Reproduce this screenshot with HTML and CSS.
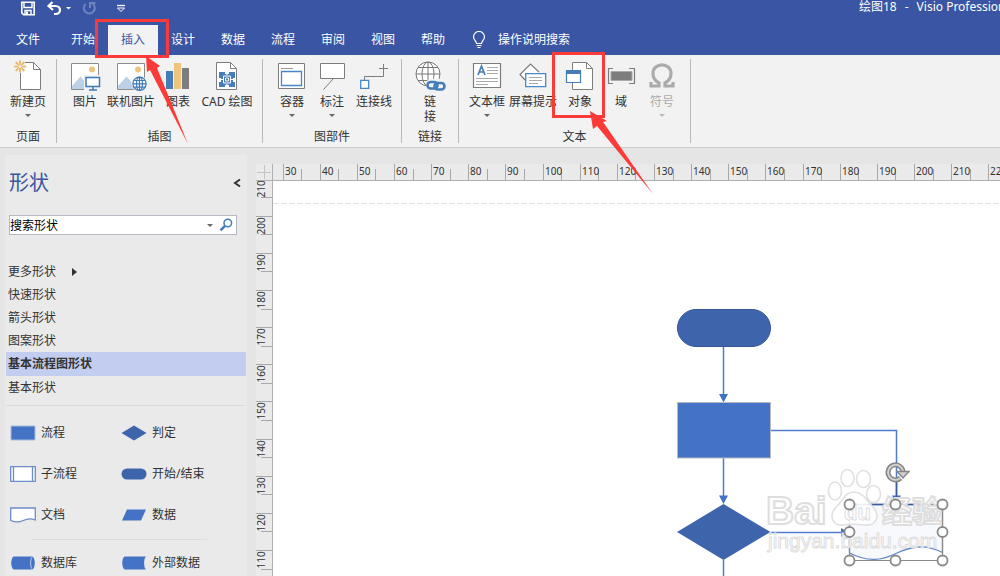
FILE: index.html
```html
<!DOCTYPE html>
<html lang="zh-CN">
<head>
<meta charset="utf-8">
<title>绘图18 - Visio Professional</title>
<link rel="stylesheet" href="styles.css">
</head>
<body>
<div class="app">
  <header class="header">
    <div class="titlebar">
      <div class="quick">
        <button class="qbtn" aria-label="保存"><svg width="16" height="16" viewBox="0 0 16 16"><path d="M1.800 2.300h12.400v12.400H3.600L1.800 13z" fill="none" stroke="#fff" stroke-width="1.600"/><path d="M4 2.500v5h8v-5M5 14.500v-4h6v4" fill="none" stroke="#fff" stroke-width="1.400"/><path d="M6 11.500h2v3H6z" fill="#fff"/></svg></button>
        <button class="qbtn" aria-label="撤消"><svg width="26" height="16" viewBox="0 0 26 16"><path d="M6.500 2L2.500 6l4.500 4M3 6h6.500c6 0 6 8 0 8H8" fill="none" stroke="#fff" stroke-width="2.200"/><path d="M20 7h5l-2.500 2.500z" fill="#fff"/></svg></button>
        <button class="qbtn" aria-label="恢复" disabled><svg width="16" height="16" viewBox="0 0 16 16"><path d="M3.500 4a5.500 5.500 0 1 0 7-.5M8 8V3h5.500" fill="none" stroke="#6f84c0" stroke-width="2"/></svg></button>
        <button class="qbtn qmore" aria-label="自定义快速访问工具栏"><svg width="10" height="10" viewBox="0 0 10 10"><path d="M1 2.500h8" stroke="#fff" stroke-width="1.300"/><path d="M1.500 5h7L5 8.500z" fill="none" stroke="#fff"/></svg></button>
      </div>
      <div class="doc-title"><span>绘图18</span><span>-</span><span>Visio Professional</span></div>
    </div>
    <nav class="tabs">
      <button class="tab file">文件</button>
      <button class="tab">开始</button>
      <button class="tab active">插入</button>
      <button class="tab">设计</button>
      <button class="tab">数据</button>
      <button class="tab">流程</button>
      <button class="tab">审阅</button>
      <button class="tab">视图</button>
      <button class="tab">帮助</button>
      <button class="tell"><svg width="14" height="18" viewBox="0 0 14 18"><path d="M4.500 12.500c0-2.500-3-3.500-3-6.500a5.500 5.500 0 0 1 11 0c0 3-3 4-3 6.500zM4.500 14.500h5M5.500 16.500h3" fill="none" stroke="#fff" stroke-width="1.200"/></svg><span>操作说明搜索</span></button>
    </nav>
  </header>

  <section class="ribbon">
    <div class="group g-page">
      <div class="tools">
        <button class="tool w56"><svg width="32" height="32" viewBox="0 0 32 32"><path d="M8.500 4v26.500h20V10.500l-7-7H13" fill="#fff" stroke="#7d7d7d"/><path d="M21.500 3.500v7h7" fill="none" stroke="#7d7d7d"/><circle cx="8" cy="7.500" r="6.500" fill="#f2f2f2"/><g stroke="#e8b35a" stroke-width="1.700"><path d="M8 1.500V5M8 10v3.500M2 7.500h3.500M10.500 7.500H14M3.700 3.200l2.500 2.500M9.800 9.300l2.500 2.500M12.300 3.200L9.800 5.700M6.200 9.300l-2.500 2.500"/></g><circle cx="8" cy="7.500" r="2" fill="none" stroke="#e8b35a"/></svg><span>新建页</span><i class="caret"></i></button>
      </div>
      <div class="gname">页面</div>
    </div>
    <div class="group g-illus">
      <div class="tools">
        <button class="tool w36"><svg width="32" height="32" viewBox="0 0 32 32"><path d="M2.500 4.500h27v26h-27z" fill="#fff" stroke="#8c8c8c"/><path d="M3 27l8.500-9.500 7 8V30H3z" fill="#bcd0e6"/><circle cx="23" cy="10.500" r="3" fill="#edc57c"/><path d="M15 16h17v16H15z" fill="#f2f2f2"/><path d="M17 18.500h13.500v9H17z" fill="#fff" stroke="#3f7ab8" stroke-width="1.500"/><path d="M24 28v3M20 31h8" stroke="#3f7ab8" stroke-width="1.500"/></svg><span>图片</span></button>
        <button class="tool w56"><svg width="32" height="32" viewBox="0 0 32 32"><path d="M2.500 4.500h27v26h-27z" fill="#fff" stroke="#8c8c8c"/><path d="M3 27l8.500-9.500 7 8V30H3z" fill="#bcd0e6"/><circle cx="23" cy="10.500" r="3" fill="#edc57c"/><circle cx="24.500" cy="24.800" r="8" fill="#f2f2f2"/><g fill="#fff" stroke="#3f7ab8" stroke-width="1.200"><circle cx="24.500" cy="24.800" r="6.600"/><ellipse cx="24.500" cy="24.800" rx="3" ry="6.600"/><path d="M18 24.800h13M19 21.500h11M19 28.200h11M24.500 18v13"/></g></svg><span>联机图片</span></button>
        <button class="tool w38"><svg width="32" height="32" viewBox="0 0 32 32"><path d="M4 12h7v18H4z" fill="#457db8"/><path d="M12 4h7v26h-7z" fill="#edc57c"/><path d="M20 9h7v21h-7z" fill="#7d7d7d"/></svg><span>图表</span></button>
        <button class="tool w60"><svg width="32" height="32" viewBox="0 0 32 32"><path d="M5.500 3.500h14l6 6v21h-20z" fill="#fff" stroke="#7d7d7d"/><path d="M19.500 3.500v6h6" fill="none" stroke="#7d7d7d"/><path d="M8 13h6v2h4v-2h6v6h-2v4h2v5h-6v-2h-4v2H8v-5h2v-4H8z" fill="#457db8"/><path d="M12.500 17h7v7h-7z" fill="#457db8" stroke="#fff"/><path d="M14.500 19h3v3h-3z" fill="none" stroke="#fff"/><path d="M16 13v3M16 25v3M8 20.500h4M20 20.500h4" stroke="#fff"/></svg><span>CAD 绘图</span></button>
      </div>
      <div class="gname">插图</div>
    </div>
    <div class="group g-parts">
      <div class="tools">
        <button class="tool w40"><svg width="32" height="32" viewBox="0 0 32 32"><path d="M2.500 4.500h26v25h-26z" fill="#fff" stroke="#7d7d7d"/><path d="M5 9.500h12" stroke="#999"/><path d="M5.500 12.500h20v14h-20z" fill="#fff" stroke="#4a86c5" stroke-width="1.300"/></svg><span>容器</span><i class="caret"></i></button>
        <button class="tool w40"><svg width="32" height="32" viewBox="0 0 32 32"><path d="M4.500 4.500h24v15h-24zM17 20L7.500 30.500" fill="#fff" stroke="#7d7d7d"/></svg><span>标注</span><i class="caret"></i></button>
        <button class="tool w44"><svg width="32" height="32" viewBox="0 0 32 32"><path d="M6.500 21v-3.500h19V5M21 9.500h9" fill="none" stroke="#7d7d7d"/><path d="M2.700 21.300h8v8h-8z" fill="#fff" stroke="#4a86c5" stroke-width="1.300"/></svg><span>连接线</span></button>
      </div>
      <div class="gname">图部件</div>
    </div>
    <div class="group g-link">
      <div class="tools">
        <button class="tool w56"><svg width="32" height="32" viewBox="0 0 32 32"><g fill="none" stroke="#777"><circle cx="14" cy="15" r="12" fill="#fff"/><ellipse cx="14" cy="15" rx="6" ry="12"/><path d="M2 15h24M4 8.500h20M4 21.500h20M14 3v24"/></g><rect x="12" y="20" width="20" height="12" rx="5" fill="#f2f2f2"/><g fill="none" stroke="#457db8" stroke-width="2.600"><rect x="13.500" y="23" width="10" height="6.500" rx="3.200"/><rect x="20.500" y="24" width="10" height="6.500" rx="3.200"/></g></svg><span>链<br>接</span></button>
      </div>
      <div class="gname">链接</div>
    </div>
    <div class="group g-text">
      <div class="tools">
        <button class="tool w40"><svg width="32" height="32" viewBox="0 0 32 32"><path d="M2.500 4.500h27v24h-27z" fill="#fff" stroke="#7d7d7d" stroke-width="1.200"/><path d="M7 16l3.500-9 3.500 9M8.200 13h4.600" fill="none" stroke="#457db8" stroke-width="1.700"/><path d="M16 8.500h11M16 11.500h11M16 14.500h11M5 19.500h22M5 22.500h22M5 25.500h12" stroke="#aaa"/></svg><span>文本框</span><i class="caret"></i></button>
        <button class="tool w52"><svg width="32" height="32" viewBox="0 0 32 32"><path d="M8 21l-5-5.500L13.500 5 22 13" fill="#fff" stroke="#7d7d7d" stroke-width="1.200"/><path d="M8.700 14.700h20v13h-20z" fill="#fff" stroke="#4a86c5" stroke-width="1.300"/><path d="M12 18.500h13M12 21.500h13M12 24.500h9" stroke="#aaa"/></svg><span>屏幕提示</span></button>
        <button class="tool w42"><svg width="32" height="32" viewBox="0 0 32 32"><path d="M8.500 3.500h14l6 6v21h-20z" fill="#fff" stroke="#7d7d7d"/><path d="M22.500 3.500v6h6" fill="none" stroke="#7d7d7d"/><path d="M2.500 11.500h14v12h-14z" fill="#fff" stroke="#457db8" stroke-width="1.200"/><path d="M2 11h15v4H2z" fill="#457db8"/></svg><span>对象</span></button>
        <button class="tool w40"><svg width="32" height="32" viewBox="0 0 32 32"><path d="M8 9.500H3.500v15H8M24 9.500h5.500v15H24" fill="none" stroke="#7d7d7d" stroke-width="1.200"/><path d="M6 12.500h21v9H6z" fill="#7d7d7d" stroke="#aaa"/></svg><span>域</span></button>
        <button class="tool w42" disabled><svg width="32" height="32" viewBox="0 0 32 32"><path d="M5 28.500V23M27 28.500V23M4.500 27H13v-3c-4-2-6-5-6-9.500 0-11.500 18-11.500 18 0 0 4.500-2 7.500-6 9.500v3h8.500" fill="none" stroke="#ababab" stroke-width="3.200"/></svg><span>符号</span><i class="caret"></i></button>
      </div>
      <div class="gname">文本</div>
    </div>
  </section>

  <main class="work">
    <aside class="panel">
      <div class="panel-head">
        <h1>形状</h1>
        <button class="collapse" aria-label="折叠"><svg width="8" height="10" viewBox="0 0 8 10"><path d="M7 1.500L2 5l5 3.500" fill="none" stroke="#333" stroke-width="2"/></svg></button>
      </div>
      <div class="search">
        <input type="text" aria-label="搜索形状" value="搜索形状">
        <i class="caret"></i>
        <button class="go" aria-label="搜索"><svg width="14" height="14" viewBox="0 0 14 14"><circle cx="8.800" cy="5" r="3.800" fill="#fff" stroke="#457db8" stroke-width="1.500"/><path d="M6 7.800L1.500 12.300" stroke="#457db8" stroke-width="2.400"/></svg></button>
      </div>
      <div class="sets">
        <button class="set">更多形状<i class="right"></i></button>
        <button class="set">快速形状</button>
        <button class="set">箭头形状</button>
        <button class="set">图案形状</button>
        <button class="set selected">基本流程图形状</button>
        <button class="set">基本形状</button>
      </div>
      <div class="stencil">
        <button class="shape"><svg width="26" height="16" viewBox="0 0 26 16"><path d="M1 1h24v14H1z" fill="#4472c4" stroke="#a9bbdf"/></svg>流程</button>
        <button class="shape"><svg width="26" height="16" viewBox="0 0 26 16"><path d="M.500 8L13 .500 25.500 8 13 15.500z" fill="#3e64ac"/></svg>判定</button>
        <button class="shape"><svg width="26" height="16" viewBox="0 0 26 16"><path d="M.700 .700h24.600v14.600H.700zM3.500 1v14M22.500 1v14" fill="#fff" stroke="#6d8cca" stroke-width="1.300"/></svg>子流程</button>
        <button class="shape"><svg width="26" height="16" viewBox="0 0 26 16"><rect x=".500" y="2.500" width="25" height="11" rx="5.500" fill="#3e64ac"/></svg>开始/结束</button>
        <button class="shape"><svg width="26" height="16" viewBox="0 0 26 16"><path d="M.700 1h24.600v12c-5-2-8-1.500-12 .5s-8 2-12.600 0z" fill="#fff" stroke="#6d8cca" stroke-width="1.300"/></svg>文档</button>
        <button class="shape"><svg width="26" height="16" viewBox="0 0 26 16"><path d="M6 2.500h19L20 13.500H1z" fill="#4472c4"/></svg>数据</button>
      </div>
      <hr class="rule">
      <div class="stencil last">
        <button class="shape"><svg width="26" height="16" viewBox="0 0 26 16"><path d="M3.500 1.500h19c3 2 3 11 0 13h-19c-3-2-3-11 0-13z" fill="#4472c4"/><path d="M22.500 1.500c-2.500 2-2.500 11 0 13" fill="none" stroke="#b8c8e6"/></svg>数据库</button>
        <button class="shape"><svg width="26" height="16" viewBox="0 0 26 16"><path d="M3.500 1.500H25c-2.500 2-2.500 11 0 13H3.500c-3-2-3-11 0-13z" fill="#4472c4"/></svg>外部数据</button>
      </div>
    </aside>

    <section class="editor">
      <div class="corner"><svg width="16" height="16" viewBox="0 0 16 16"><path d="M8.500 1v14M1 8.500h14" stroke="#c4c4c4"/></svg></div>
      <svg class="ruler-h" id="rulerH"></svg>
      <svg class="ruler-v" id="rulerV"></svg>
      <div class="canvas">
        <svg class="drawing" width="727" height="395" viewBox="273 181 727 395">
          <path d="M273 203.500h727" stroke="#e2e2e2" stroke-dasharray="6 2"/>
          <g fill="none" stroke="#4f7dcc" stroke-width="1.500">
            <path d="M723.500 347v50M723.500 458v40M723.500 560v20M771 430.500h125.500V498M771 532.500h72"/>
          </g>
          <g fill="#4472c4">
            <path d="M719 394h9l-4.500 8.500zM719 495.500h9l-4.500 8.500zM892 495.500h9l-4.500 8.500zM841 528l8 4.500-8 4.500z"/>
          </g>
          <rect x="677.500" y="309.500" width="93" height="37" rx="18.500" fill="#3e64ac" stroke="#34579a"/>
          <rect x="677.500" y="402.500" width="93" height="55.500" fill="#4472c4" stroke="#b5b9c2"/>
          <path d="M677 532l46.500-28 47 28-47 28z" fill="#3e64ac"/>
          <path d="M849.500 504.500h93v48c-18-9-32-6-46.500 1s-28 9-46.500-.5z" fill="#f8f9fc" stroke="#6286ca" stroke-width="1.300"/>
          <path d="M849.500 504.500h93v56h-93zM896.500 478v26" fill="none" stroke="#8a8a8a" stroke-width="1.200"/>
          <path d="M868 504.500h60M896.500 480v20" stroke="#3c5c9e" stroke-width="1.500"/>
          <g fill="#fff" fill-opacity=".85" stroke="#e0e0e0" stroke-width="1.600">
            <ellipse cx="835" cy="491" rx="6.500" ry="9"/>
            <ellipse cx="847.500" cy="478" rx="6.500" ry="8.500"/>
            <ellipse cx="863.500" cy="479" rx="7" ry="8.500"/>
            <ellipse cx="873.500" cy="494" rx="7" ry="8.500"/>
            <path d="M854 492c-9 0-11 9-18 15-8 9-3 19 7 18 7-1 15-1 22 0 11 1 16-9 8-18-6-6-10-15-19-15z"/>
          </g>
          <g class="mark">
            <text x="766" y="524" class="mark-big">Bai</text>
            <text x="844" y="520" class="mark-du">du</text>
            <text x="882" y="522" class="mark-cn">经验</text>
            <text x="768" y="548" class="mark-url">jingyan.baidu.com</text>
          </g>
          <g fill="#fff" stroke="#8a8a8a" stroke-width="1.800">
            <circle cx="849.500" cy="504.500" r="5"/><circle cx="895.500" cy="504.500" r="5"/><circle cx="942.500" cy="504.500" r="5"/>
            <circle cx="849.500" cy="532" r="5"/><circle cx="942.500" cy="532" r="5"/>
            <circle cx="849.500" cy="560.500" r="5"/><circle cx="895.500" cy="560.500" r="5"/><circle cx="942.500" cy="560.500" r="5"/>
          </g>
          <path d="M900.500 478a7.500 7.500 0 1 1 2.500-6.500" fill="none" stroke="#858585" stroke-width="5"/>
          <path d="M900.500 478a7.500 7.500 0 1 1 2.500-6.500" fill="none" stroke="#d0d0d0" stroke-width="2"/>
          <path d="M897 471.500h12l-6 6.500z" fill="#d0d0d0" stroke="#858585" stroke-width="1.400"/>
        </svg>
      </div>
    </section>
  </main>

  <svg class="notes" width="660" height="200" viewBox="0 0 660 200">
    <g fill="none" stroke="#fc3a38" stroke-width="3">
      <rect x="96.500" y="20.500" width="71" height="36"/>
      <rect x="553.500" y="53.500" width="50" height="63"/>
    </g>
    <g fill="#fc3a38">
      <path d="M146 56l14 10-3 2 31 76-38-74-3 2z"/>
      <path d="M590 111l17 10-4 1 50 72-56-68-4 3z"/>
    </g>
  </svg>
</div>
<script src="ruler.js"></script>
</body>
</html>
```
FILE: styles.css
```css
* { box-sizing: border-box; }
body {
  margin: 0;
  font: 12px/16px "Noto Sans", "Noto Sans CJK SC", sans-serif;
  color: #333;
}
button {
  font: inherit;
  color: inherit;
  background: none;
  border: 0;
  padding: 0;
  margin: 0;
}
svg { display: block; flex: none; }
i { display: block; }

.app {
  position: relative;
  display: flex;
  flex-direction: column;
  height: 100vh;
  overflow: hidden;
  background: #e5e5e5;
}

.header { background: #3955a3; color: #fff; flex: none; }
.titlebar {
  display: flex;
  justify-content: space-between;
  height: 25px;
}
.quick { display: flex; align-items: flex-start; gap: 10px; padding-left: 20px; }
.qmore { padding: 3px 0 0 8px; }
.doc-title {
  display: flex;
  gap: 8px;
  width: 141px;
  white-space: nowrap;
  overflow: hidden;
  line-height: 14px;
}
.tabs { display: flex; height: 30px; }
.tab { width: 50px; }
.tab.file { width: 58px; padding-right: 2px; }
.tab.active { background: #f2f2f2; color: #3955a3; }
.tell { display: flex; align-items: center; gap: 12px; margin-left: 14px; }

.ribbon {
  display: flex;
  flex: none;
  background: #f2f2f2;
  border-bottom: 1px solid #cfcfcf;
  padding: 4px 0;
}
.group {
  display: flex;
  flex-direction: column;
  justify-content: space-between;
  border-right: 1px solid #b8b8b8;
  height: 84px;
}
.tools { display: flex; }
.g-illus .tools { padding: 0 5px 0 10px; }
.g-parts .tools { padding: 0 5px 0 9px; }
.g-text .tools { padding: 0 7px 0 8px; }
.tool {
  display: flex;
  flex-direction: column;
  align-items: center;
  white-space: nowrap;
}
.tool span { line-height: 15px; margin-top: 3px; }
.tool:disabled { color: #ababab; }
.tool .caret { margin-top: 5px; }
.w36 { width: 36px; }
.w38 { width: 38px; }
.w40 { width: 40px; }
.w42 { width: 42px; }
.w44 { width: 44px; }
.w52 { width: 52px; }
.w56 { width: 56px; }
.w60 { width: 60px; }
.gname { text-align: center; line-height: 12px; }
.caret {
  border: 3px solid transparent;
  border-top-color: #666;
  border-bottom: 0;
}
.tool:disabled .caret { border-top-color: #bbb; }

.work { display: flex; flex: 1; min-height: 0; }
.panel {
  width: 242px;
  flex: none;
  margin: 7px 9px 0 5px;
  background: #eaeaea;
  overflow: hidden;
}
.panel-head {
  display: flex;
  justify-content: space-between;
  align-items: center;
  padding: 13px 6px 0 4px;
}
.panel-head h1 { margin: 0; font-size: 20px; line-height: 30px; font-weight: 400; color: #3955a3; }
.search {
  display: flex;
  align-items: center;
  margin: 17px 10px 0 4px;
  height: 20px;
  background: #fff;
  border: 1px solid #b5b9c2;
}
.search input {
  flex: 1;
  min-width: 0;
  border: 0;
  padding: 2px 0 0;
  background: none;
  font: inherit;
  color: #000;
}
.go { padding: 0 3px 0 6px; }
.sets { display: flex; flex-direction: column; margin: 25px 1px 0; padding-bottom: 6px; border-bottom: 1px solid #dcdcdc; }
.set {
  display: flex;
  align-items: center;
  gap: 16px;
  text-align: left;
  height: 23px;
  padding-left: 2px;
}
.selected { height: 24px; background: #c2cdf0; font-weight: 700; }
.right {
  border: 4px solid transparent;
  border-left: 5px solid #333;
  border-right: 0;
}
.stencil {
  display: grid;
  grid-template-columns: 111px 1fr;
  row-gap: 25px;
  padding: 19px 5px 0;
}
.stencil.last { padding-top: 15px; }
.shape { display: flex; align-items: center; gap: 5px; }
.rule { border: 0; border-top: 1px solid #dcdcdc; margin: 16px 40px 0 26px; }

.editor {
  flex: 1;
  min-width: 0;
  display: grid;
  grid-template-columns: 17px 1fr;
  grid-template-rows: 17px 1fr;
  margin-top: 16px;
}
.corner, .ruler-h, .ruler-v { background: #eaeaea; }
.corner { border-right: 1px solid #b0b0b0; border-bottom: 1px solid #b0b0b0; }
.ruler-h { width: 100%; height: 17px; border-bottom: 1px solid #b0b0b0; }
.ruler-v { width: 17px; height: 100%; border-right: 1px solid #b0b0b0; }
.ruler-h text, .ruler-v text { font-size: 10px; fill: #333; }
.tick { stroke: #a8a8a8; }
.canvas { position: relative; overflow: hidden; background: #fff; }
.drawing { position: absolute; left: 0; top: 0; }

.mark { fill: #fff; fill-opacity: .8; stroke: #dedede; font-family: "Liberation Sans", "Noto Sans CJK SC", sans-serif; }
.mark-big { font-size: 39px; font-weight: 700; stroke-width: 2px; }
.mark-du { font-size: 22px; font-weight: 700; }
.mark-cn { font-size: 30px; font-weight: 700; stroke-width: 2px; }
.mark-url { font-size: 21px; }

.notes { position: absolute; left: 0; top: 0; pointer-events: none; }
```
FILE: ruler.js
```js
const NS = "http://www.w3.org/2000/svg";
const PITCH = 37.15;

function add(parent, name, attrs, text) {
  const el = document.createElementNS(NS, name);
  for (const key in attrs) el.setAttribute(key, attrs[key]);
  if (text) el.textContent = text;
  parent.appendChild(el);
}

const h = document.getElementById("rulerH");
for (let n = 0; n < 20; n++) {
  const x = Math.floor(10 + n * PITCH) + 0.5;
  const mid = Math.floor(10 + (n + 0.5) * PITCH) + 0.5;
  add(h, "path", { class: "tick", d: `M${x} 0v16M${mid} 5v11` });
  add(h, "text", { x: x + 1.5, y: 11 }, String(30 + n * 10));
}

const v = document.getElementById("rulerV");
for (let n = 0; n < 11; n++) {
  const y = Math.floor(n * PITCH - 2) + 0.5;
  const mid = Math.floor((n + 0.5) * PITCH - 2) + 0.5;
  add(v, "path", { class: "tick", d: `M0 ${y}h16M5 ${mid}h11` });
  add(v, "text", { transform: `translate(9 ${y + 18}) rotate(-90)` }, String(210 - n * 10));
}
```
